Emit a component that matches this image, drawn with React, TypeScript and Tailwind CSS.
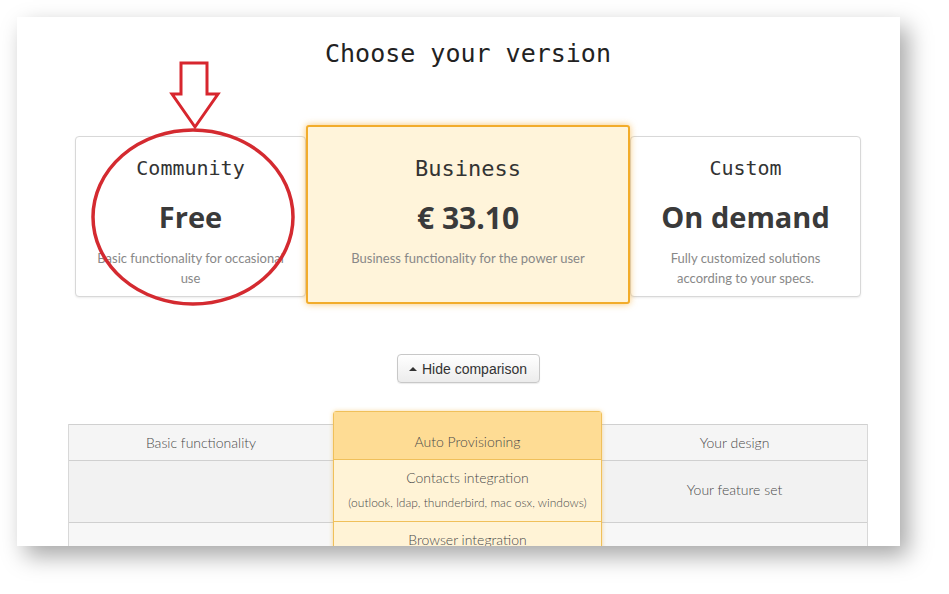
import React from "react";

const mono = "font-['DejaVu_Sans_Mono',monospace]";
const body = "font-['Lato','Open_Sans',sans-serif]";

function SideCard({ name, price, desc }: { name: string; price: string; desc: React.ReactNode }) {
  return (
    <div className="mt-[11px] h-[161px] w-[231px] rounded-[4px] border border-[#d8d8d8] bg-white pt-[18px] text-center shadow-[0_1px_2px_rgba(0,0,0,0.08)]">
      <div className={`${mono} text-[20px] leading-[26px] text-[#333]`}>{name}</div>
      <div className="mt-[18px] font-['Open_Sans',sans-serif] text-[29px] font-bold leading-[36px] text-[#3a3a3a]">{price}</div>
      <div className={`${body} mt-[13px] px-4 text-[13px] leading-[20px] text-[#888]`}>{desc}</div>
    </div>
  );
}

export default function App() {
  return (
    <div className="relative h-[594px] w-[949px] overflow-hidden bg-white pl-[17px] pt-[17px]">
      <div className="h-[529px] w-[883px] overflow-hidden bg-white shadow-[8px_10px_22px_rgba(0,0,0,0.35)]">
        <div className="ml-[51px] w-[800px]">
          <h1 className={`${mono} pt-[22px] text-center text-[25px] leading-[30px] text-[#222]`}>Choose your version</h1>

          <div className="mt-[56px] flex items-start px-[7px]">
            <SideCard name="Community" price="Free" desc={<>Basic functionality for occasional<br />use</>} />
            <div className="z-10 h-[179px] w-[324px] rounded-[3px] border-2 border-[#f2ac2b] bg-[#fff4da] pt-[28px] text-center shadow-[0_0_7px_rgba(245,166,35,0.65)]">
              <div className={`${mono} text-[22px] leading-[28px] text-[#333]`}>Business</div>
              <div className="mt-[17px] font-['Open_Sans',sans-serif] text-[30px] font-bold leading-[36px] text-[#3a3a3a]">€ 33.10</div>
              <div className={`${body} mt-[12px] text-[13px] leading-[20px] text-[#888]`}>Business functionality for the power user</div>
            </div>
            <SideCard name="Custom" price="On demand" desc={<>Fully customized solutions<br />according to your specs.</>} />
          </div>

          <div className="mt-[50px] flex justify-center">
            <button className="flex h-[29px] w-[143px] items-center justify-center gap-[5px] rounded-[4px] border border-[#c8c8c8] bg-gradient-to-b from-white to-[#ececec] pt-[1px] font-['Liberation_Sans',sans-serif] text-[14px] text-[#333] shadow-[0_1px_1px_rgba(0,0,0,0.08)]">
              <span className="inline-block h-0 w-0 border-x-[4px] border-b-[4px] border-x-transparent border-b-[#333]" />
              Hide comparison
            </button>
          </div>

          <div className={`${body} mt-[28px] flex items-start text-[14px] font-light text-[#4a4a4a]`}>
            <div className="mt-[13px] w-[265px] border-l border-[#d8d8d8]">
              <div className="flex h-[37px] items-center justify-center border-y border-[#d0d0d0] bg-[#f5f5f5]">Basic functionality</div>
              <div className="h-[62px] border-b border-[#d0d0d0] bg-[#f2f2f2]" />
              <div className="h-[60px] bg-[#f7f7f7]" />
            </div>
            <div className="z-10 w-[269px] rounded-t-[3px] border border-[#f0c05a] shadow-[0_0_4px_rgba(240,170,40,0.45)]">
              <div className="h-[48px] border-b border-[#f0c05a] bg-[#fedc94] pt-[20px] text-center leading-[20px]">Auto Provisioning</div>
              <div className="h-[62px] border-b border-[#f0c05a] bg-[#fff3d6] pt-[8px] text-center">
                <div className="leading-[20px]">Contacts integration</div>
                <div className="mt-[5px] text-[12px] leading-[20px]">(outlook, ldap, thunderbird, mac osx, windows)</div>
              </div>
              <div className="h-[60px] bg-[#fff3d6] pt-[8px] text-center leading-[20px]">Browser integration</div>
            </div>
            <div className="mt-[13px] w-[266px] border-r border-[#d8d8d8]">
              <div className="flex h-[37px] items-center justify-center border-y border-[#d0d0d0] bg-[#f5f5f5]">Your design</div>
              <div className="flex h-[62px] items-center justify-center border-b border-[#d0d0d0] bg-[#f2f2f2] pb-[4px]">Your feature set</div>
              <div className="h-[60px] bg-[#f7f7f7]" />
            </div>
          </div>
        </div>
      </div>

      <svg className="pointer-events-none absolute left-0 top-0" width="949" height="594">
        <polygon points="181,63 207,63 207,94 218,94 195,127 172,94 181,94" fill="none" stroke="#d7262e" strokeWidth="3" strokeLinejoin="miter" />
        <ellipse cx="193" cy="217" rx="100" ry="87" fill="none" stroke="#d42a30" strokeWidth="3.5" />
      </svg>
    </div>
  );
}
